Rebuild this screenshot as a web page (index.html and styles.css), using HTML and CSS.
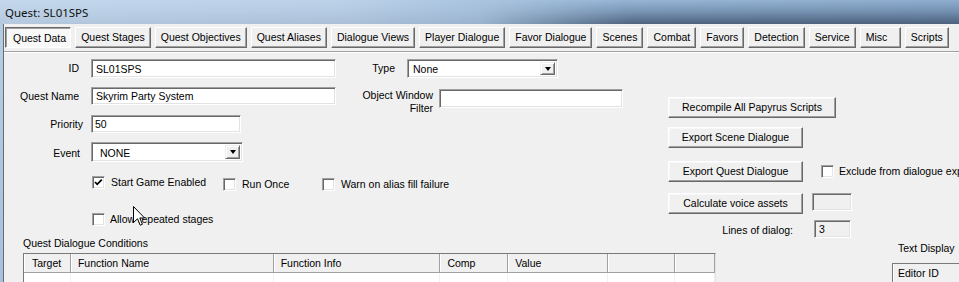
FILE: index.html
```html
<!DOCTYPE html>
<html>
<head>
<meta charset="utf-8">
<title>Quest: SL01SPS</title>
<link rel="stylesheet" href="styles.css">
</head>
<body>
<div class="window">
  <div class="titlebar"><span class="title-text">Quest: SL01SPS</span></div>
  <div class="frame">
    <div class="edge"></div>
    <div class="client">
      <div class="tabs">
        <div class="tab tab-active">Quest Data</div>
        <div class="tab">Quest Stages</div>
        <div class="tab">Quest Objectives</div>
        <div class="tab">Quest Aliases</div>
        <div class="tab">Dialogue Views</div>
        <div class="tab">Player Dialogue</div>
        <div class="tab">Favor Dialogue</div>
        <div class="tab">Scenes</div>
        <div class="tab">Combat</div>
        <div class="tab">Favors</div>
        <div class="tab">Detection</div>
        <div class="tab">Service</div>
        <div class="tab tab-misc">Misc</div>
        <div class="tab">Scripts</div>
      </div>
      <div class="sep"></div>
      <div class="page">
        <div class="form">
          <div class="row row-1">
            <div class="lbl">ID</div>
            <div class="field field-id">SL01SPS</div>
            <div class="lbl lbl-type">Type</div>
            <div class="combo combo-type"><span class="combo-text">None</span><span class="combo-btn"><span class="arrow"></span></span></div>
          </div>
          <div class="row row-2">
            <div class="lbl">Quest Name</div>
            <div class="field field-name">Skyrim Party System</div>
            <div class="lbl-owf">Object Window<br>Filter</div>
            <div class="field field-owf"></div>
          </div>
          <div class="row row-3">
            <div class="lbl lbl-priority">Priority</div>
            <div class="field field-priority">50</div>
          </div>
          <div class="row row-4">
            <div class="lbl lbl-event">Event</div>
            <div class="combo combo-event"><span class="combo-text combo-text-event">NONE</span><span class="combo-btn"><span class="arrow"></span></span></div>
          </div>
          <div class="row row-5">
            <div class="check check-start">
              <span class="chk"><svg class="tick" viewBox="0 0 11 11" width="11" height="11"><polyline points="2,5 4.2,7.3 8.8,2.6" fill="none" stroke="#000" stroke-width="1.8"/></svg></span>
              <span>Start Game Enabled</span>
            </div>
            <div class="check check-once"><span class="chk"></span><span>Run Once</span></div>
            <div class="check check-warn"><span class="chk"></span><span>Warn on alias fill failure</span></div>
          </div>
          <div class="row row-6">
            <div class="check check-allow"><span class="chk"></span><span>Allow repeated stages</span></div>
          </div>
        </div>
        <div class="actions">
          <div class="btn btn-recompile">Recompile All Papyrus Scripts</div>
          <div class="btn btn-std btn-scene">Export Scene Dialogue</div>
          <div class="act-row act-quest">
            <div class="btn btn-std">Export Quest Dialogue</div>
            <span class="chk chk-exclude"></span>
            <span class="exclude-label">Exclude from dialogue export</span>
          </div>
          <div class="act-row act-calc">
            <div class="btn btn-std">Calculate voice assets</div>
            <div class="field field-ro field-voice"></div>
          </div>
          <div class="act-row act-lines">
            <div class="lines-label">Lines of dialog:</div>
            <div class="field field-ro field-lines">3</div>
          </div>
        </div>
        <div class="bottom">
          <div class="cond">
            <div class="cond-label">Quest Dialogue Conditions</div>
            <div class="list">
              <div class="list-head">
                <div class="hc c1">Target</div>
                <div class="hc c2">Function Name</div>
                <div class="hc c3">Function Info</div>
                <div class="hc c4">Comp</div>
                <div class="hc c5">Value</div>
                <div class="hc c6"></div>
                <div class="hc c7"></div>
              </div>
              <div class="list-body">
                <div class="bc c1"></div>
                <div class="bc c2"></div>
                <div class="bc c3"></div>
                <div class="bc c4"></div>
                <div class="bc c5"></div>
                <div class="bc c6"></div>
                <div class="bc c7"></div>
              </div>
            </div>
          </div>
          <div class="textdisp">
            <div class="textdisp-label">Text Display</div>
            <div class="list list-small">
              <div class="list-head"><div class="hc hc-editor">Editor ID</div></div>
            </div>
          </div>
        </div>
      </div>
    </div>
  </div>
  <svg class="cursor" width="13" height="21" viewBox="0 0 13 21"><path d="M0.5,0.5 L0.5,16.5 L4.5,12.8 L7.2,19.2 L9.4,18.3 L6.8,12 L11.6,12 Z" fill="#fff" stroke="#000" stroke-width="1"/></svg>
</div>
</body>
</html>
```
FILE: styles.css
```css
* { box-sizing: border-box; }
html, body { margin: 0; padding: 0; }
body {
  width: 959px;
  height: 282px;
  overflow: hidden;
  background: #f0f0f0;
  font-family: "Liberation Sans", Arial, sans-serif;
  font-size: 10.5px;
  color: #000;
}
.window { position: relative; width: 959px; height: 282px; overflow: hidden; }

/* title bar */
.titlebar {
  position: relative;
  height: 24px;
  padding-left: 5px;
  line-height: 25px;
  background: linear-gradient(to right, #c4d8ed 0%, #bdd3ea 35%, #a9c3df 52%, #97b6d6 65%, #8fafd0 100%);
}
.titlebar::before {
  content: "";
  position: absolute;
  inset: 0;
  background: linear-gradient(to bottom, rgba(40,60,90,0) 0%, rgba(40,60,90,0.25) 45%, rgba(30,45,70,0.6) 100%);
  -webkit-mask-image: linear-gradient(to right, rgba(0,0,0,0.15) 0%, rgba(0,0,0,0.2) 50%, #000 66%, #000 100%);
  mask-image: linear-gradient(to right, rgba(0,0,0,0.15) 0%, rgba(0,0,0,0.2) 50%, #000 66%, #000 100%);
}
.title-text {
  position: relative;
  font-family: "Noto Sans", "Open Sans", sans-serif;
  font-size: 11.5px;
  color: #111;
}

.frame { display: flex; height: 258px; }
.edge { width: 3px; background: linear-gradient(to bottom, #b4cde6, #a6c1de); }
.client {
  flex: 1;
  border-left: 1px solid #6b6b6b;
  background: #f0f0f0;
  overflow: hidden;
}

/* tabs */
.tabs { display: flex; gap: 4px; padding: 3px 0 0 1px; height: 24px; }
.tab {
  height: 21px;
  line-height: 19px;
  padding: 0 5px;
  border: 1px solid;
  border-color: #fff #696969 #696969 #fff;
  box-shadow: inset -1px -1px #a0a0a0;
  background: #f0f0f0;
  white-space: nowrap;
}
.tab-active {
  border-color: #696969 #fff #fff #696969;
  box-shadow: inset 1px 1px #a0a0a0;
  background: #f8f8f8;
  padding-left: 7px;
  padding-right: 4px;
  line-height: 21px;
}
.tab-misc { width: 41px; }
.sep { margin-top: 3px; height: 2px; border-top: 1px solid #a0a0a0; border-bottom: 1px solid #fff; }

/* page grid */
.page {
  display: grid;
  grid-template-columns: 664px 1fr;
  grid-template-rows: 185px auto;
}

.row { display: flex; align-items: flex-start; }
.row-1 { margin-top: 6px; height: 19px; }
.row-2 { margin-top: 9px; height: 18px; }
.row-3 { margin-top: 10px; height: 18px; }
.row-4 { margin-top: 9px; height: 20px; }
.row-5 { margin-top: 14px; height: 14px; padding-left: 88px; }
.row-6 { margin-top: 22px; height: 13px; padding-left: 88px; }

.lbl { width: 75px; margin-right: 12px; text-align: right; white-space: nowrap; line-height: 18px; }
.row-1 .lbl { line-height: 19px; }
.lbl-type { width: 59px; margin-right: 12px; }
.lbl-priority { width: 79px; margin-right: 8px; }
.lbl-event { width: 76px; margin-right: 11px; line-height: 20px; }
.row-4 .lbl-event { line-height: 22px; }
.lbl-owf { width: 97px; margin-right: 6px; margin-top: 2px; text-align: right; line-height: 13px; white-space: nowrap; }

.field {
  height: 18px;
  background: #fff;
  border: 1px solid;
  border-color: #a0a0a0 #fff #fff #a0a0a0;
  box-shadow: inset 1px 1px #696969, inset -1px -1px #e3e3e3;
  padding: 0 4px;
  line-height: 17px;
  white-space: nowrap;
}
.field-id { width: 245px; height: 19px; line-height: 18px; }
.field-name { width: 245px; }
.field-owf { width: 184px; height: 19px; margin-top: 2px; }
.field-priority { width: 150px; padding-left: 3px; }
.field-ro { background: #f0f0f0; }
.field-voice { width: 40px; margin-left: 9px; }
.field-lines { width: 37px; margin-left: 21px; line-height: 16px; padding-left: 4px; }

/* combo */
.combo {
  display: flex;
  align-items: stretch;
  background: #fff;
  border: 1px solid;
  border-color: #a0a0a0 #fff #fff #a0a0a0;
  box-shadow: inset 1px 1px #696969, inset -1px -1px #e3e3e3;
  padding: 2px 2px 2px 2px;
}
.combo-type { width: 151px; height: 19px; }
.combo-event { width: 152px; height: 20px; }
.combo-text { flex: 1; padding-left: 3px; line-height: 15px; white-space: nowrap; }
.combo-text-event { padding-left: 6px; line-height: 17px; }
.combo-btn {
  width: 15px;
  display: flex;
  align-items: center;
  justify-content: center;
  background: #f0f0f0;
  border: 1px solid;
  border-color: #f0f0f0 #696969 #696969 #f0f0f0;
  box-shadow: inset 1px 1px #fff, inset -1px -1px #a0a0a0;
}
.arrow {
  width: 0;
  height: 0;
  border-top: 4px solid #000;
  border-left: 3.5px solid transparent;
  border-right: 3.5px solid transparent;
}

/* checkboxes */
.check { display: flex; align-items: center; gap: 6px; white-space: nowrap; line-height: 13px; }
.check-start { width: 131px; }
.check-once { width: 99px; margin-top: 2px; }
.check-warn { margin-top: 2px; }
.check-allow { gap: 5px; margin-top: 1px; }
.chk {
  flex: none;
  position: relative;
  width: 13px;
  height: 13px;
  background: #fff;
  border: 1px solid;
  border-color: #a0a0a0 #fff #fff #a0a0a0;
  box-shadow: inset 1px 1px #696969, inset -1px -1px #e3e3e3;
}
.tick { display: block; position: absolute; left: 0; top: 0; }

/* actions */
.actions { display: flex; flex-direction: column; align-items: flex-start; }
.btn {
  height: 21px;
  border: 1px solid;
  border-color: #fff #696969 #696969 #fff;
  box-shadow: inset -1px -1px #a0a0a0, inset 1px 1px #f8f8f8;
  background: #f0f0f0;
  text-align: center;
  line-height: 19px;
  white-space: nowrap;
}
.btn-recompile { width: 168px; margin-top: 44px; }
.btn-std { width: 135px; }
.btn-scene { margin-top: 9px; }
.act-row { display: flex; align-items: flex-start; white-space: nowrap; }
.act-quest { margin-top: 13px; }
.chk-exclude { margin-left: 18px; margin-top: 4px; }
.exclude-label { margin-left: 5px; line-height: 21px; }
.act-calc { margin-top: 11px; }
.act-lines { margin-top: 6px; }
.lines-label { width: 125px; text-align: right; line-height: 20px; }

/* bottom */
.bottom { grid-column: 1 / -1; display: flex; align-items: flex-start; }
.cond { padding-left: 19px; }
.cond-label { line-height: 11px; height: 11px; white-space: nowrap; }
.list {
  margin-top: 4px;
  width: 693px;
  background: #fff;
  border-top: 1px solid #7a7a7a;
  border-left: 1px solid #7a7a7a;
  border-right: 1px solid #e3e3e3;
}
.list-head { display: flex; height: 19px; background: #f0f0f0; border-bottom: 1px solid #a0a0a0; }
.hc {
  height: 18px;
  line-height: 18px;
  padding-left: 7px;
  border-right: 1px solid #a0a0a0;
  box-shadow: inset 1px 0 #fff;
  white-space: nowrap;
}
.list-body { display: flex; height: 40px; }
.bc { border-right: 1px solid #f0f0f0; }
.c1 { width: 47px; padding-left: 8px; }
.c2 { width: 203px; }
.c3 { width: 167px; }
.c4 { width: 68px; }
.c5 { width: 100px; }
.c6 { width: 67px; }
.c7 { width: 40px; }

.textdisp { margin-left: 176px; }
.textdisp-label { margin-top: 4px; padding-left: 6px; line-height: 12px; white-space: nowrap; }
.list-small { margin-top: 9px; width: 90px; height: 30px; }
.list-small .list-head { height: 20px; }
.hc-editor { width: 100px; padding-left: 5px; height: 19px; line-height: 19px; }

.cursor { position: absolute; left: 133px; top: 206px; }
```
